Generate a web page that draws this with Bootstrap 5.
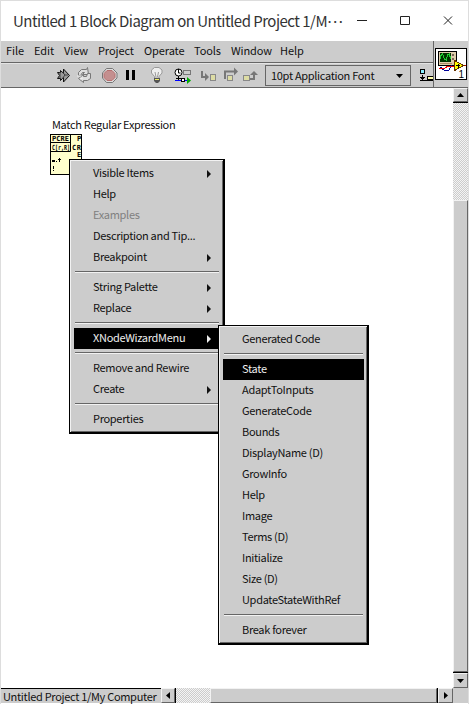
<!DOCTYPE html>
<html lang="en">
<head>
<meta charset="utf-8">
<meta name="viewport" content="width=device-width, initial-scale=1">
<title>Untitled 1 Block Diagram</title>
<link href="https://cdn.jsdelivr.net/npm/bootstrap@5.3.0/dist/css/bootstrap.min.css" rel="stylesheet">
<style>
body{font-family:"Noto Sans CJK JP","Noto Sans CJK SC",sans-serif;font-size:11px;letter-spacing:-.31px;line-height:20px;color:#111;background:#fff;overflow:hidden}
svg{display:block;flex:none}
.win{width:469px;height:704px;border:1px solid #ddd;border-bottom:0}
.titlebar{height:40px;padding-left:12px;color:#333}
.titlebar .caption{font-size:15px;letter-spacing:-.52px;line-height:40px;width:331px;white-space:nowrap}
.titlebar .dots{vertical-align:4px;line-height:0}
.face{background:#ccc}
.menus{height:22px;border-bottom:1px solid #666;padding-left:5px;letter-spacing:-.1px}
.menus span{white-space:nowrap;line-height:19px}
.tools{height:25px;border-top:1px solid #e4e4e4;border-bottom:1px solid #666;overflow:hidden}
.fontbox{width:147px;height:21px;border:1px solid #666;line-height:19px;padding:0 7px 0 5px;margin-left:7px}
.conn{width:35px;border-left:1px solid #666;border-bottom:1px solid #666;padding:7px 0 0 1px}
.check{background:repeating-conic-gradient(#ccc 0 25%,#f4f4f4 0 50%) 0 0/2px 2px}
.raised{background:#ccc;border:solid;border-width:1px;border-color:#f2f2f2 #666 #666 #f2f2f2}
.vbar{width:15px}
.sbtn{display:flex;align-items:center;justify-content:center;flex:none}
.statusbar{height:15px}
.project{width:160px;border-top:1px solid #000;padding-left:2px;line-height:15px;white-space:nowrap;flex:none}
.popup{position:absolute;background:#ccc;border:solid #000;border-width:1px 2px 2px 1px;box-shadow:inset 1px 1px #f2f2f2,inset -1px -1px #666;padding:3px 3px 2px 4px}
.popup .item{height:21px;padding:0 9px 0 19px;display:flex;align-items:center;justify-content:space-between;white-space:nowrap;line-height:19px}
.popup .item span{padding-bottom:2px}
.popup .item.on{background:#000;color:#eee}
.popup .item.off{color:#808080}
.popup .rule{height:9px;padding:3px 1px 0}
.popup .rule::before{content:"";display:block;height:2px;background:#666;border-bottom:1px solid #f2f2f2}
.main-menu{left:69px;top:159px;width:156px;height:275px}
.sub-menu{left:218px;top:325px;width:151px;height:320px}
.canvas{padding:27px 0 0 51px}
.nodelabel{line-height:18px;height:18px}
.nodeicon{margin-left:-2px}
.nodeicon text{font:bold 7px "DejaVu Sans Mono",monospace;letter-spacing:0}
</style>
</head>
<body>
<div class="win d-flex flex-column position-relative">
  <div class="titlebar d-flex align-items-center">
    <div class="caption">Untitled 1 Block Diagram on Untitled Project 1/M<span class="dots">⋯</span></div>
    <svg width="110" height="20" viewBox="0 0 110 20" fill="none" stroke="#222"><path d="M13 9.500h10M56.500 5.500h9v8h-9z"/><path d="M100 5.500l8 8M108 5.500l-8 8"/></svg>
  </div>
  <div class="d-flex face">
    <div class="flex-grow-1 overflow-hidden">
      <div class="menus d-flex"><span style="width:28px">File</span><span style="width:30px">Edit</span><span style="width:34px">View</span><span style="width:46px">Project</span><span style="width:50px">Operate</span><span style="width:37px">Tools</span><span style="width:49px">Window</span><span>Help</span></div>
      <div class="tools d-flex align-items-center">
        <svg width="257" height="24" viewBox="1 64 257 24">
          <g stroke="#111" fill="#999"><path d="M57.500 72.500h3v-2l3 3v-4.500l6 6.500-6 6.500v-4.500l-3 3v-2h-3l2-3z"/><path d="M62 71.500l3 3.500-3 4M60 72v6M64 75h4" stroke="#444" fill="none"/></g>
          <g stroke="#777" fill="#ddd"><path d="M78.500 75.500v-3l3-3h5l1-2 1 7h-6l2-2h-2l-2 3z"/><path d="M90.500 73.500v5l-3 2h-4v2l-5-4 5-4v2h3l1-3z"/><path d="M77 76h4M83 78l-3 1" stroke="#eee"/></g>
          <path d="M106.500 68.500h6l4.500 4.500v5l-4.500 4.500h-6L102.500 78v-5z" fill="#ddd" stroke="#777"/><path d="M107 70.500h5l3 3v4l-3 3h-5l-3-3v-4z" fill="#c48f8f" stroke="#b66f6f"/>
          <path d="M126 70h3v10h-3zM132 70h3v10h-3z"/>
          <path d="M154.500 78v-1.500l-3-3.500v-3l3-2.500h4.500l3 2.500v3l-3 3.500v1.500z" fill="#eee" stroke="#999"/><path d="M155 72l1 5M158.500 72l-1 5" stroke="#999"/><path d="M154 78h6v3l-2 2h-2l-2-2z" fill="#555"/><path d="M155 79.500h4" stroke="#ee6"/>
          <circle cx="178.500" cy="72.500" r="3.500" fill="#fff" stroke="#000"/><path d="M178.500 69v4h2M178.500 76v5M176 78.500h5" stroke="#000" fill="none"/><rect x="183.500" y="70.500" width="7" height="4" fill="#ccc" stroke="#777"/><path d="M175 80.500h13" stroke="#00f"/><path d="M187 77l4 3.500-4 3.500z" fill="#0a0"/><rect x="181.500" y="78.500" width="3" height="3" fill="#fff" stroke="#000"/>
          <g stroke="#777" fill="none" stroke-width="2"><path d="M202 71v6h5M225 79v-7.500h10M254 79v-6"/></g>
          <g fill="#777"><path d="M205 73l4 4-4 4zM234 67.500l4 4-4 4zM250 75l4-4 4 4z"/></g>
          <g fill="#dddca4" stroke="#888"><rect x="210.500" y="74.500" width="5" height="6"/><rect x="227.500" y="75.500" width="5" height="5"/><rect x="243.500" y="75.500" width="6" height="5"/></g><path d="M250 79h5" stroke="#777" stroke-width="2"/>
        </svg>
        <div class="fontbox d-flex justify-content-between align-items-center"><span>10pt Application Font</span><svg width="7" height="4"><path d="M0 0h7L3.500 4z"/></svg></div>
        <svg width="22" height="24" viewBox="411 64 22 24" shape-rendering="crispEdges"><rect x="420.500" y="69.500" width="4" height="4" fill="#8ef" stroke="#000"/><path d="M422.500 75v5M420 77.500h5M421 78.500h3M420 80.500h14" stroke="#000"/><path d="M427.500 76.500h7v3h-7z" fill="#ffa" stroke="#000"/></svg>
      </div>
    </div>
    <div class="conn">
      <svg width="32" height="32" shape-rendering="crispEdges"><rect x=".5" y=".5" width="31" height="31" fill="#fff" stroke="#000"/><rect x="3.500" y="3.500" width="18" height="14" fill="#dca" stroke="#000"/><rect x="5" y="5" width="11" height="9" fill="#030"/><path d="M5.500 11v-3l2-2 2 5 2 1 1-5 2-1 1 5" fill="none" stroke="#2c3"/><path d="M17 6h2v2h-2zM17 10h2v2h-2z" fill="#765"/><path d="M5 15.500h12" stroke="#a86"/><path d="M5 19l4 3h5l3-5" fill="none" stroke="#009"/><path d="M4 20h6l3-2h7M27 17h4" fill="none" stroke="#e00"/><path d="M19.500 12.500l9 5-9 5z" fill="#ff0" stroke="#630"/><path d="M21 17.500h4M23 15.500v4" stroke="#000"/><text x="23.500" y="30" font-size="10" font-family="Liberation Sans, sans-serif">1</text></svg>
    </div>
  </div>
  <div class="d-flex" style="height:600px">
    <div class="canvas flex-grow-1">
      <div class="nodelabel">Match Regular Expression</div>
      <svg class="nodeicon" width="34" height="42" viewBox="52 133 34 42">
        <rect x="52.500" y="134.500" width="31" height="40" fill="#ffc" stroke="#000"/><path d="M52 142.500h20M52 151.500h20.500v-17" fill="none" stroke="#000"/>
        <text x="54" y="141" textLength="17">PCRE</text>
        <text x="54" y="149.500" textLength="18" lengthAdjust="spacingAndGlyphs">C[r,R]</text>
        <text x="79" y="141">P</text>
        <text x="74" y="149.500" textLength="9">CR</text>
        <text x="79" y="157">E</text>
        <path d="M54 160h3v2h-3zM58 161h1v1h-1zM61 158h1v4h-1zM60 159h3v1h-3zM55 166h1v3h-1zM55 170h1v1h-1z"/>
      </svg>
    </div>
    <div class="vbar face d-flex flex-column">
      <div class="raised sbtn" style="height:14px"><svg width="7" height="4"><path d="M0 4h7L3.500 0z"/></svg></div>
      <div style="height:1px;background:#000"></div>
      <div class="check" style="height:97px"></div>
      <div class="raised" style="height:472px"></div>
      <div style="height:1px;background:#000"></div>
      <div class="raised sbtn" style="height:15px"><svg width="7" height="4"><path d="M0 0h7L3.500 4z"/></svg></div>
    </div>
  </div>
  <div class="statusbar d-flex face">
    <div class="project">Untitled Project 1/My Computer</div>
    <div class="raised sbtn" style="width:14px"><svg width="4" height="7"><path d="M4 0v7L0 3.500z"/></svg></div>
    <div style="width:1px;background:#000"></div>
    <div class="check" style="width:34px"></div>
    <div class="raised" style="width:227px"></div>
    <div style="width:1px;background:#000"></div>
    <div class="raised sbtn" style="width:15px"><svg width="4" height="7"><path d="M0 0v7L4 3.500z"/></svg></div>
  </div>
</div>

<div class="popup main-menu">
  <div class="item"><span>Visible Items</span><svg width="4" height="8" fill="currentColor"><path d="M0 0l4 4-4 4z"/></svg></div>
  <div class="item"><span>Help</span></div>
  <div class="item off"><span>Examples</span></div>
  <div class="item"><span>Description and Tip...</span></div>
  <div class="item"><span>Breakpoint</span><svg width="4" height="8" fill="currentColor"><path d="M0 0l4 4-4 4z"/></svg></div>
  <div class="rule"></div>
  <div class="item"><span>String Palette</span><svg width="4" height="8" fill="currentColor"><path d="M0 0l4 4-4 4z"/></svg></div>
  <div class="item"><span>Replace</span><svg width="4" height="8" fill="currentColor"><path d="M0 0l4 4-4 4z"/></svg></div>
  <div class="rule"></div>
  <div class="item on"><span>XNodeWizardMenu</span><svg width="4" height="8" fill="currentColor"><path d="M0 0l4 4-4 4z"/></svg></div>
  <div class="rule"></div>
  <div class="item"><span>Remove and Rewire</span></div>
  <div class="item"><span>Create</span><svg width="4" height="8" fill="currentColor"><path d="M0 0l4 4-4 4z"/></svg></div>
  <div class="rule"></div>
  <div class="item"><span>Properties</span></div>
</div>

<div class="popup sub-menu">
  <div class="item"><span>Generated Code</span></div>
  <div class="rule"></div>
  <div class="item on"><span>State</span></div>
  <div class="item"><span>AdaptToInputs</span></div>
  <div class="item"><span>GenerateCode</span></div>
  <div class="item"><span>Bounds</span></div>
  <div class="item"><span>DisplayName (D)</span></div>
  <div class="item"><span>GrowInfo</span></div>
  <div class="item"><span>Help</span></div>
  <div class="item"><span>Image</span></div>
  <div class="item"><span>Terms (D)</span></div>
  <div class="item"><span>Initialize</span></div>
  <div class="item"><span>Size (D)</span></div>
  <div class="item"><span>UpdateStateWithRef</span></div>
  <div class="rule"></div>
  <div class="item"><span>Break forever</span></div>
</div>
<script src="https://cdn.jsdelivr.net/npm/bootstrap@5.3.0/dist/js/bootstrap.bundle.min.js"></script>
</body>
</html>
